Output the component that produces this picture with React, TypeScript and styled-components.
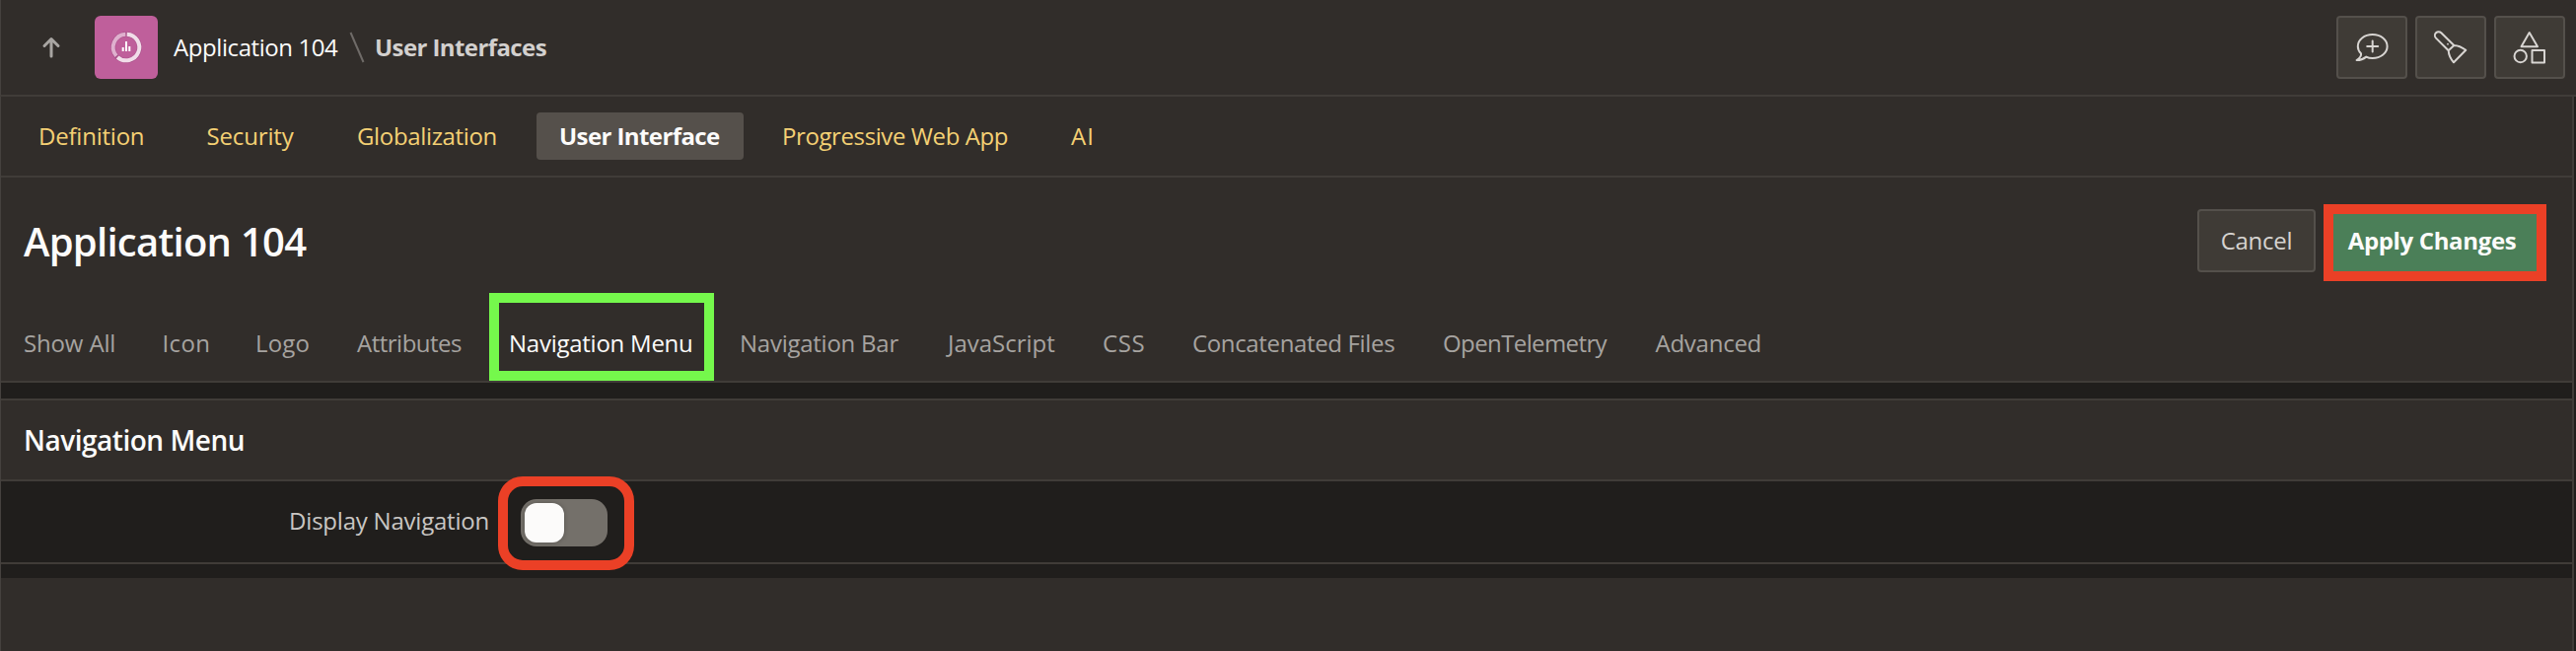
import React from 'react';
import styled, { createGlobalStyle } from 'styled-components';

const color = {
  surface: '#312d2a',
  dark: '#201e1c',
  line: '#403c38',
  button: '#3f3b36',
  buttonBorder: '#54504b',
  red: '#eb4026',
  green: '#75f84c',
};

const GlobalStyle = createGlobalStyle`
  * { box-sizing: border-box; }
  body {
    margin: 0;
    background: ${color.dark};
    font: 400 24px/1.36 "Open Sans", "Noto Sans", sans-serif;
    color: #fcfbfa;
  }
  h1, h2 { margin: 0; }
  svg { display: block; fill: none; flex: none; }
`;

const Page = styled.div`
  display: flex;
  flex-direction: column;
  width: 2612px;
  height: 660px;
  overflow: hidden;
`;

const Header = styled.header`
  display: flex;
  align-items: center;
  height: 98px;
  flex: none;
  padding: 0 11px 0 39px;
  background: ${color.surface};
  border-left: 1px solid #45413e;
  border-bottom: 2px solid ${color.line};
`;

const AppIcon = styled.div`
  display: grid;
  place-items: center;
  width: 64px;
  height: 64px;
  margin: 0 16px 0 32px;
  border-radius: 6px;
  background: #bf5f9b;
`;

const Crumb = styled.span<{ $current?: boolean }>`
  width: ${p => (p.$current ? 'auto' : '168px')};
  white-space: nowrap;
  font-weight: ${p => (p.$current ? 700 : 400)};
  letter-spacing: ${p => (p.$current ? -0.59 : -0.42)}px;
  color: ${p => (p.$current ? '#d3d0ce' : '#fcfbfa')};
`;

const Slash = styled.svg`
  margin: 0 10px;
`;

const Tools = styled.div`
  display: flex;
  gap: 8px;
  margin-left: auto;
`;

const ToolButton = styled.button`
  display: grid;
  place-items: center;
  width: 72px;
  height: 64px;
  padding: 0;
  border: 2px solid ${color.buttonBorder};
  border-radius: 4px;
  background: ${color.button};

  svg { stroke: #d8d5d2; stroke-width: 2; stroke-linejoin: round; stroke-linecap: round; }
`;

const Body = styled.main`
  display: flex;
  flex-direction: column;
  width: 2610px;
  flex: 1;
  border-left: 1px solid #45413e;
  border-right: 2px solid ${color.line};
`;

const PageNav = styled.nav`
  display: flex;
  align-items: center;
  gap: 16px;
  height: 82px;
  padding-left: 15px;
  background: ${color.surface};
  border-bottom: 2px solid ${color.line};
`;

const PageLink = styled.a<{ $w: number; $ls: number; $active?: boolean }>`
  width: ${p => p.$w}px;
  height: 48px;
  padding-left: 23px;
  line-height: 48px;
  white-space: nowrap;
  border-radius: 4px;
  letter-spacing: ${p => p.$ls}px;
  font-weight: ${p => (p.$active ? 700 : 400)};
  color: ${p => (p.$active ? '#fcfbfa' : '#f4d074')};
  background: ${p => (p.$active ? '#55504b' : 'transparent')};
`;

const TitleBar = styled.div`
  display: flex;
  align-items: center;
  height: 132px;
  padding: 0 26px 0 23px;
  background: ${color.surface};
`;

const Title = styled.h1`
  margin-bottom: 2px;
  font-size: 40px;
  font-weight: 600;
  letter-spacing: -0.74px;
  white-space: nowrap;
`;

const Button = styled.button<{ $hot?: boolean }>`
  width: ${p => (p.$hot ? 226 : 120)}px;
  height: ${p => (p.$hot ? 78 : 64)}px;
  margin: ${p => (p.$hot ? '0 0 0 8px' : '0 0 4px auto')};
  padding: ${p => (p.$hot ? '0 6px 4px 0' : '0')};
  border: ${p => (p.$hot ? `10px solid ${color.red}` : `2px solid ${color.buttonBorder}`)};
  border-radius: ${p => (p.$hot ? 0 : 4)}px;
  background: ${p => (p.$hot ? '#4b7f58' : color.button)};
  color: ${p => (p.$hot ? '#fcfbfa' : '#d6d3d0')};
  font: inherit;
  font-weight: ${p => (p.$hot ? 700 : 400)};
  letter-spacing: ${p => (p.$hot ? -0.35 : -0.25)}px;
  white-space: nowrap;
`;

const Tabs = styled.nav`
  display: flex;
  gap: 48px;
  height: 76px;
  padding-left: 23px;
  line-height: 72px;
  background: ${color.surface};
  border-bottom: 2px solid ${color.line};
`;

const Tab = styled.a<{ $w: number; $ls: number; $active?: boolean }>`
  position: relative;
  width: ${p => p.$w}px;
  white-space: nowrap;
  letter-spacing: ${p => p.$ls}px;
  color: ${p => (p.$active ? '#fcfbfa' : '#a6a3a0')};
`;

const TabMarker = styled.span`
  position: absolute;
  top: -15px;
  left: -20px;
  width: 228px;
  height: 89px;
  border: 10px solid ${color.green};
`;

const Region = styled.section`
  margin-top: 16px;
  border-top: 2px solid ${color.line};
  border-bottom: 2px solid ${color.line};
`;

const RegionHeader = styled.h2`
  height: 82px;
  padding-left: 23px;
  line-height: 80px;
  font-size: 28px;
  font-weight: 600;
  letter-spacing: -0.48px;
  background: ${color.surface};
  border-bottom: 2px solid ${color.line};
`;

const Field = styled.div`
  display: flex;
  align-items: center;
  height: 82px;
`;

const Label = styled.label`
  width: 495px;
  margin: 0 32px 2px 0;
  text-align: right;
  letter-spacing: -0.22px;
  color: #c9c6c3;
`;

const Switch = styled.div`
  position: relative;
  display: flex;
  align-items: center;
  width: 88px;
  height: 48px;
  margin-top: 2px;
  padding-left: 4px;
  border-radius: 16px;
  background: #74706a;
`;

const Knob = styled.span`
  width: 40px;
  height: 40px;
  border-radius: 12px;
  background: #fcfbfa;
  box-shadow: 0 0 5px rgba(0, 0, 0, 0.25);
`;

const SwitchMarker = styled.span`
  position: absolute;
  top: -23px;
  left: -23px;
  width: 138px;
  height: 95px;
  border: 10px solid ${color.red};
  border-radius: 25px;
`;

const Footer = styled.footer`
  flex: 1;
  margin-top: 14px;
  background: ${color.surface};
`;

const pages = [
  { name: 'Definition', w: 154.5, ls: -0.22 },
  { name: 'Security', w: 136.5, ls: -0.15 },
  { name: 'Globalization', w: 189, ls: -0.35 },
  { name: 'User Interface', w: 210, ls: -0.59, active: true },
  { name: 'Progressive Web App', w: 277, ls: -0.4 },
  { name: 'AI', w: 70, ls: 1 },
];

const tabs = [
  { name: 'Show All', w: 92.6, ls: -0.15 },
  { name: 'Icon', w: 46.4, ls: 0.3 },
  { name: 'Logo', w: 55, ls: 0.2 },
  { name: 'Attributes', w: 106, ls: -0.5 },
  { name: 'Navigation Menu', w: 186, ls: -0.25, active: true },
  { name: 'Navigation Bar', w: 163, ls: -0.25 },
  { name: 'JavaScript', w: 109, ls: 0 },
  { name: 'CSS', w: 43, ls: 0.6 },
  { name: 'Concatenated Files', w: 206, ls: -0.35 },
  { name: 'OpenTelemetry', w: 167.5, ls: -0.6 },
  { name: 'Advanced', w: 107, ls: -0.25 },
];

export default function App() {
  return (
    <Page>
      <GlobalStyle />
      <Header>
        <svg width="24" height="24" stroke="#a8a5a2" strokeWidth="3" strokeLinecap="round" strokeLinejoin="round">
          <path d="M12 21V3.5M5 10.5l7-7 7 7" />
        </svg>
        <AppIcon>
          <svg width="40" height="40">
            <circle cx="20" cy="20" r="13.3" stroke="#a85089" strokeWidth="5" />
            <path d="M20.7 6.7A13.3 13.3 0 1 1 11.1 29.9" stroke="#f1dde9" strokeWidth="4" />
            <path d="M10 28.7A13.3 13.3 0 0 1 19.3 6.7" stroke="#dfb0ce" strokeWidth="4" />
            <path d="M15.7 20h2v4h-2zM19 14h2v10h-2zM22.3 19h2v5h-2z" fill="#fff" />
          </svg>
        </AppIcon>
        <Crumb>Application 104</Crumb>
        <Slash width="16" height="32" stroke="#6f6b68" strokeWidth="2">
          <path d="M1.5 1l13 30" />
        </Slash>
        <Crumb $current>User Interfaces</Crumb>
        <Tools>
          <ToolButton aria-label="Comments">
            <svg width="40" height="40">
              <path d="M9 26.3C6.9 24.3 5.8 21.8 5.8 19C5.8 12.2 12.4 7 20.7 7S35.6 12.2 35.6 19S29 31 20.7 31C18.3 31 16 30.5 14.3 29.6C11.5 31.8 8.4 33.2 4.6 33.1C8 30.7 9.6 28.6 9 26.3Z" />
              <path d="M15.2 19h11M20.7 13.5v11" />
            </svg>
          </ToolButton>
          <ToolButton aria-label="Search">
            <svg width="40" height="40">
              <path d="M23.3 18L10.3 5.3A3.7 3.7 0 0 0 5 10.6L17.7 23.2ZM23.3 18Q29 18.2 35.3 22.8L23 35.3Q18 29.5 17.7 23.2" />
              <circle cx="17" cy="16.7" r="0.9" fill="#d8d5d2" stroke="none" />
            </svg>
          </ToolButton>
          <ToolButton aria-label="Shared components">
            <svg width="40" height="40">
              <path d="M19.7 5L11.5 19.2h16.5Z" />
              <circle cx="10.7" cy="29" r="6.2" />
              <path d="M22.5 23h12.5v12.5h-12.5z" />
            </svg>
          </ToolButton>
        </Tools>
      </Header>
      <Body>
        <PageNav>
          {pages.map(p => (
            <PageLink key={p.name} $w={p.w} $ls={p.ls} $active={p.active}>{p.name}</PageLink>
          ))}
        </PageNav>
        <TitleBar>
          <Title>Application 104</Title>
          <Button>Cancel</Button>
          <Button $hot>Apply Changes</Button>
        </TitleBar>
        <Tabs>
          {tabs.map(t => (
            <Tab key={t.name} $w={t.w} $ls={t.ls} $active={t.active}>
              {t.name}
              {t.active && <TabMarker />}
            </Tab>
          ))}
        </Tabs>
        <Region>
          <RegionHeader>Navigation Menu</RegionHeader>
          <Field>
            <Label>Display Navigation</Label>
            <Switch role="switch" aria-checked="false">
              <Knob />
              <SwitchMarker />
            </Switch>
          </Field>
        </Region>
        <Footer />
      </Body>
    </Page>
  );
}
